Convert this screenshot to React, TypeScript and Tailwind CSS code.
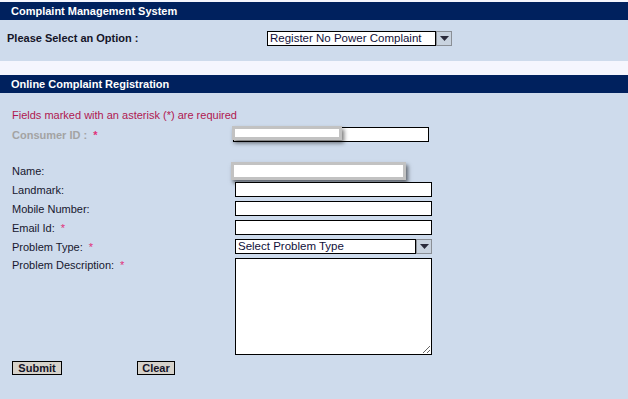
import React from "react";

const font = { fontFamily: '"Liberation Sans", Arial, sans-serif' };

function Caret() {
  return (
    <svg width="9" height="5" viewBox="0 0 9 5" className="block">
      <path d="M0 0h9L4.5 5z" fill="#2a2a3a" />
    </svg>
  );
}

function FakeSelect({ value, width }: { value: string; width: string }) {
  return (
    <div className={`flex h-[15px] ${width}`}>
      <div className="flex h-full flex-1 items-center border border-black bg-white pl-[2px] text-[11.5px] leading-[13px] text-[#10103a]">
        {value}
      </div>
      <div className="flex h-full w-[16px] items-center justify-center border border-[#8a8f96] bg-[#c9d3df]">
        <Caret />
      </div>
    </div>
  );
}

function Star() {
  return <span className="ml-[6px] text-[#e0307a]">*</span>;
}

function Row({
  label,
  required,
  children,
  className = "",
}: {
  label: string;
  required?: boolean;
  children: React.ReactNode;
  className?: string;
}) {
  return (
    <div className={`flex items-center ${className}`}>
      <div className="w-[223px] shrink-0 text-[11px] leading-[14px] text-[#17172e]">
        {label}
        {required && <Star />}
      </div>
      {children}
    </div>
  );
}

function TextBox({ w = "w-[197px]" }: { w?: string }) {
  return <input className={`block h-[15px] ${w} border border-black bg-white`} />;
}

export default function App() {
  return (
    <div style={font} className="flex h-[399px] w-[628px] flex-col overflow-hidden bg-[#f5f6fe] pt-[2px]">
      <div className="flex h-[18px] items-center bg-[#00215e] pl-[11px] text-[11px] font-bold text-white">
        Complaint Management System
      </div>
      <div className="flex h-[41px] items-start bg-[#cedbec] pt-[11px]">
        <div className="w-[267px] shrink-0 pl-[7px] text-[11px] font-bold leading-[14px] text-[#141428]">
          Please Select an Option :
        </div>
        <FakeSelect value="Register No Power Complaint" width="w-[185px]" />
      </div>

      <div className="h-[14px]" />

      <div className="flex h-[18px] items-center bg-[#00215e] pl-[11px] text-[11px] font-bold text-white">
        Online Complaint Registration
      </div>

      <div className="flex flex-1 flex-col bg-[#cedbec] pl-[12px] pt-[15px]">
        <div className="text-[11px] leading-[14px] text-[#b01850]">
          Fields marked with an asterisk (*) are required
        </div>

        <div className="mt-[5px] flex items-center">
          <div className="w-[221px] shrink-0 text-[11px] font-bold leading-[14px] text-[#a3a3a3]">
            Consumer ID :
            <Star />
          </div>
          <div className="relative">
            <TextBox w="w-[196px]" />
            <div className="absolute left-[-1px] top-[-1px] h-[14px] w-[110px] border-[3px] border-[#c2c2c2] bg-white shadow-[2px_3px_4px_rgba(0,0,0,0.55)]" />
          </div>
        </div>

        <div className="mt-[20px] flex h-[18px] items-center">
          <div className="w-[219px] shrink-0 text-[11px] leading-[14px] text-[#17172e]">Name:</div>
          <div className="h-[18px] w-[175px] border-[3px] border-[#c2c2c2] bg-white shadow-[2px_3px_4px_rgba(0,0,0,0.55)]" />
        </div>

        <Row label="Landmark:" className="mt-[2px]">
          <TextBox />
        </Row>
        <Row label="Mobile Number:" className="mt-[4px]">
          <TextBox />
        </Row>
        <Row label="Email Id:" required className="mt-[4px]">
          <TextBox />
        </Row>
        <Row label="Problem Type:" required className="mt-[4px]">
          <FakeSelect value="Select Problem Type" width="w-[197px]" />
        </Row>

        <div className="mt-[4px] flex items-start">
          <div className="w-[223px] shrink-0 text-[11px] leading-[14px] text-[#17172e]">
            Problem Description:
            <Star />
          </div>
          <textarea className="block h-[97px] w-[197px] border border-black bg-white" />
        </div>

        <div className="mt-[6px] flex items-center">
          <button className="flex h-[14px] w-[50px] items-center justify-center border border-black bg-[#d6d2cb] text-[11px] font-bold leading-[12px] text-[#141428]">
            Submit
          </button>
          <button className="ml-[75px] flex h-[14px] w-[38px] items-center justify-center border border-black bg-[#d6d2cb] text-[11px] font-bold leading-[12px] text-[#141428]">
            Clear
          </button>
        </div>
      </div>
    </div>
  );
}
